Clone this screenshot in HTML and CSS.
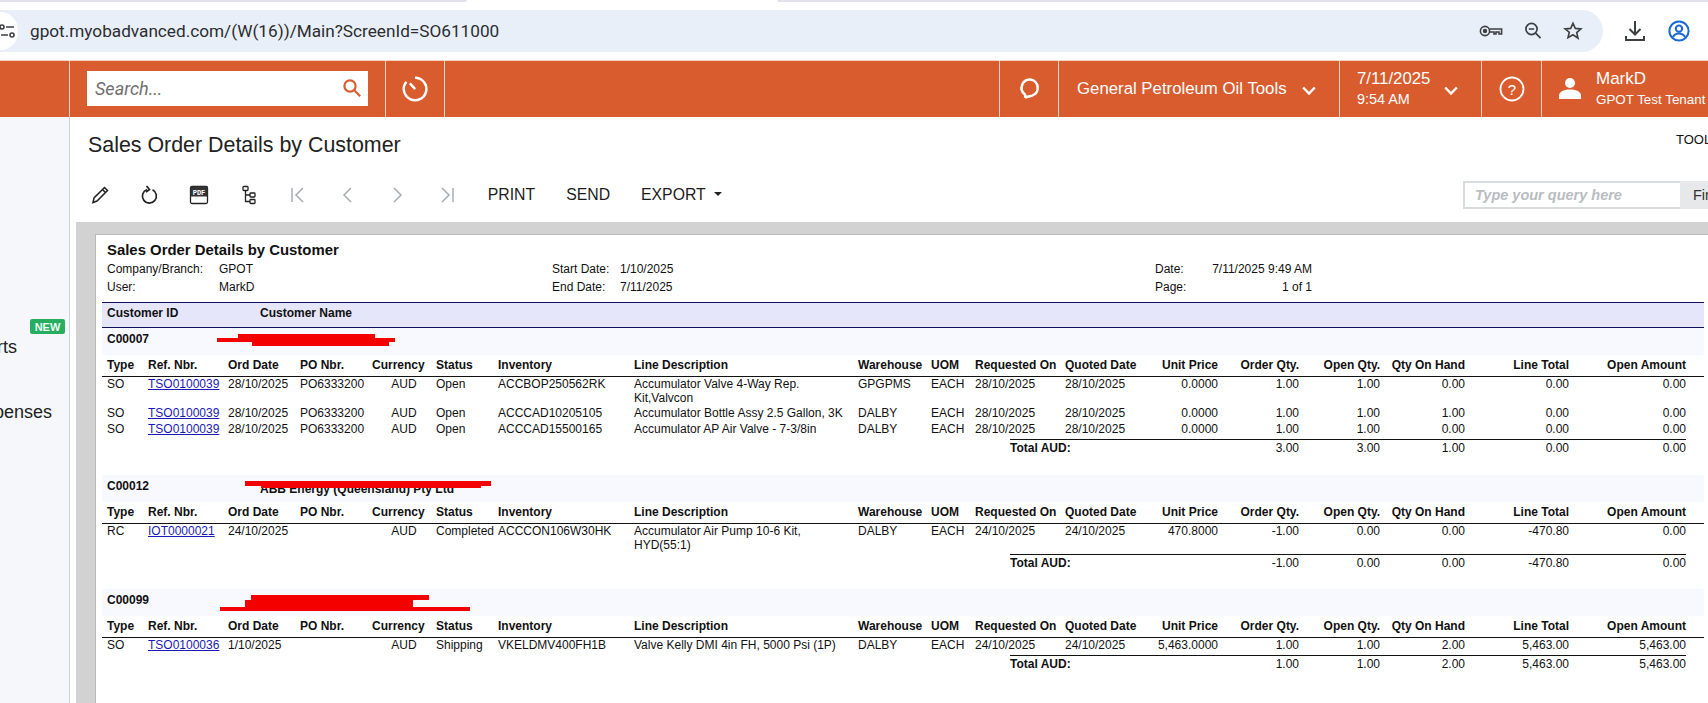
FILE: index.html
```html
<!DOCTYPE html>
<html lang="en">
<head>
<meta charset="utf-8">
<title>Sales Order Details by Customer</title>
<link rel="stylesheet" href="styles.css">
</head>
<body>
<header class="chrome">
  <div class="tabstrip"><span class="tab-edge tab-edge--a"></span><span class="tab-edge tab-edge--b"></span></div>
  <div class="chrome-row">
    <div class="omnibox">
      <span class="site-info">
        <svg width="16" height="16" viewBox="0 0 16 16" fill="none" stroke="#3c4043" stroke-width="1.6"><circle cx="2" cy="4" r="2"/><path d="M6 4h8M1 12h7"/><circle cx="12" cy="12" r="2"/></svg>
      </span>
      <span class="url">gpot.myobadvanced.com/(W(16))/Main?ScreenId=SO611000</span>
      <span class="omni-icons">
        <svg width="24" height="16" viewBox="0 0 24 16" fill="none" stroke="#3c4043" stroke-width="1.6"><circle cx="6" cy="8" r="4.6"/><circle cx="6" cy="8" r="1.4" fill="#3c4043"/><path d="M10.6 6h12v5h-2.6V9H17v2h-2V9h-4.4"/></svg>
        <svg width="20" height="20" viewBox="0 0 20 20" fill="none" stroke="#3c4043" stroke-width="1.7"><circle cx="8.5" cy="8" r="5.6"/><path d="M5.8 8h5.4M12.6 12.2l5 5"/></svg>
        <svg width="20" height="20" viewBox="0 0 20 20" fill="none" stroke="#3c4043" stroke-width="1.6"><path d="M10 2.2l2.3 5.2 5.6.5-4.2 3.7 1.3 5.5L10 13.8l-5 2.9 1.3-5.5L2.1 7.9l5.6-.5z"/></svg>
      </span>
    </div>
    <span class="chrome-btn chrome-btn--dl">
      <svg width="22" height="24" viewBox="0 0 22 24" fill="none" stroke="#3c4043" stroke-width="2"><path d="M11 2v13M5.5 10l5.5 5.5 5.500-5.500"/><path d="M2 17v4h18v-4" stroke-width="2"/></svg>
    </span>
    <span class="chrome-btn chrome-btn--profile">
      <svg width="22" height="22" viewBox="0 0 22 22" fill="none" stroke="#1a68d1" stroke-width="2"><circle cx="11" cy="11" r="9.6"/><circle cx="11" cy="8.6" r="3.2"/><path d="M4.8 17c1.6-2.6 3.6-3.6 6.2-3.6s4.6 1 6.2 3.6"/></svg>
    </span>
  </div>
</header>

<nav class="topbar">
  <div class="bar-cell bar-logo"></div>
  <div class="bar-cell bar-search">
    <div class="search-box">
      <span class="search-ph">Search...</span>
      <svg width="20" height="20" viewBox="0 0 20 20" fill="none" stroke="#d95c2e" stroke-width="2.2"><circle cx="8" cy="8" r="5.6"/><path d="M12.2 12.2l6 6"/></svg>
    </div>
  </div>
  <div class="bar-cell bar-timer">
    <svg width="28" height="28" viewBox="0 0 26 26" fill="none" stroke="#fff" stroke-width="2.3"><path d="M13 2.5a10.5 10.5 0 1 1-8 3.8"/><path d="M8.2 7.8l5 5.4"/></svg>
  </div>
  <div class="bar-cell bar-spacer"></div>
  <div class="bar-cell bar-chat">
    <svg width="24" height="26" viewBox="0 0 20 22" fill="none" stroke="#fff" stroke-width="2.2"><path d="M11 3a7 7 0 0 1 1.6 13.600c-1.600.5-5.600 1.400-6 1.900.6-1.300.3-2.400-.3-3.100A7 7 0 0 1 11 3z"/></svg>
  </div>
  <div class="bar-cell bar-company">
    <span class="company-name">General Petroleum Oil Tools</span>
    <svg class="chev" width="14" height="10" viewBox="0 0 14 10" fill="none" stroke="#fff" stroke-width="2.4"><path d="M1.200 1.500L7 7.500l5.800-6"/></svg>
  </div>
  <div class="bar-cell bar-date">
    <div class="date-text"><div class="date-main">7/11/2025</div><div class="date-time">9:54 AM</div></div>
    <svg class="chev" width="14" height="10" viewBox="0 0 14 10" fill="none" stroke="#fff" stroke-width="2.4"><path d="M1.200 1.500L7 7.500l5.800-6"/></svg>
  </div>
  <div class="bar-cell bar-help">
    <svg width="26" height="26" viewBox="0 0 26 26" fill="none" stroke="#fff" stroke-width="1.8"><circle cx="13" cy="13" r="11.500"/><text x="13" y="18.500" class="help-q">?</text></svg>
  </div>
  <div class="bar-cell bar-user">
    <svg width="24" height="26" viewBox="0 0 24 26" fill="#fff"><circle cx="12" cy="7" r="5"/><path d="M1 23v-3c0-4 4-6.500 11-6.500s11 2.500 11 6.500v3z"/></svg>
    <div class="user-text"><div class="user-name">MarkD</div><div class="user-tenant">GPOT Test Tenant</div></div>
  </div>
</nav>

<div class="workspace">
  <aside class="sidebar">
    <span class="badge-new">NEW</span>
    <div class="nav-item nav-item--reports"><span>Reports</span></div>
    <div class="nav-item nav-item--expenses"><span>Expenses</span></div>
  </aside>

  <main class="content">
    <div class="title-row">
      <h1 class="page-title">Sales Order Details by Customer</h1>
      <span class="tools-link">TOOLS</span>
    </div>
    <div class="toolbar">
      <span class="tool">
        <svg width="20" height="20" viewBox="0 0 20 20" fill="none" stroke="#222" stroke-width="1.500"><path d="M3 17.500l1-4.500L14.500 2.500l3 3L7 16z"/><path d="M12.500 4.500l3 3"/></svg>
      </span>
      <span class="tool">
        <svg width="20" height="20" viewBox="0 0 20 20" fill="none" stroke="#222" stroke-width="1.700"><path d="M8 4.500a7 7 0 1 0 5.500 .3"/><path d="M7.500 1l3 3.500-3.500 2.500"/></svg>
      </span>
      <span class="tool">
        <svg width="20" height="20" viewBox="0 0 20 20"><rect x="1.500" y="1.500" width="17" height="17" rx="1.500" fill="none" stroke="#222" stroke-width="1.300"/><rect x="1.500" y="1.500" width="17" height="10" fill="#333"/><text x="10" y="9.800" class="pdf-label">PDF</text></svg>
      </span>
      <span class="tool">
        <svg width="14" height="20" viewBox="0 0 14 20" fill="none" stroke="#222" stroke-width="1.300"><rect x="1" y="1.500" width="5" height="4" rx=".8"/><rect x="8" y="8" width="5" height="4" rx=".8"/><rect x="8" y="14.500" width="5" height="4" rx=".8"/><path d="M3.500 5.500V16.500H8M3.500 10H8"/></svg>
      </span>
      <span class="tool">
        <svg width="20" height="20" viewBox="0 0 20 20" fill="none" stroke="#a9adb3" stroke-width="1.500"><path d="M4 3v14M15 3L8 10l7 7"/></svg>
      </span>
      <span class="tool">
        <svg width="20" height="20" viewBox="0 0 20 20" fill="none" stroke="#a9adb3" stroke-width="1.500"><path d="M13 3l-7 7 7 7"/></svg>
      </span>
      <span class="tool">
        <svg width="20" height="20" viewBox="0 0 20 20" fill="none" stroke="#a9adb3" stroke-width="1.500"><path d="M7 3l7 7-7 7"/></svg>
      </span>
      <span class="tool">
        <svg width="20" height="20" viewBox="0 0 20 20" fill="none" stroke="#a9adb3" stroke-width="1.500"><path d="M16 3v14M5 3l7 7-7 7"/></svg>
      </span>
      <span class="tool-text tool-text--print">PRINT</span>
      <span class="tool-text tool-text--send">SEND</span>
      <span class="tool-text tool-text--export">EXPORT<i class="caret"></i></span>
      <div class="query">
        <span class="query-input">Type your query here</span>
        <span class="query-btn">Find</span>
      </div>
    </div>

    <div class="viewer">
      <div class="sheet">
        <div class="report-title">Sales Order Details by Customer</div>
        <div class="meta">
          <span>Company/Branch:</span><span>GPOT</span><span>Start Date:</span><span>1/10/2025</span><span>Date:</span><span class="meta-right">7/11/2025 9:49 AM</span>
          <span>User:</span><span>MarkD</span><span>End Date:</span><span>7/11/2025</span><span>Page:</span><span class="meta-right">1 of 1</span>
        </div>
        <div class="cust-head"><span>Customer ID</span><span>Customer Name</span></div>

        <section class="group">
          <div class="band">
            <span class="band-id">C00007</span>
            <svg class="scribble" width="400" height="27"><rect x="136" y="6" width="137" height="4"/><rect x="115" y="10" width="178" height="4"/><rect x="150" y="14" width="137" height="4"/></svg>
          </div>
          <div class="grid head">
            <span>Type</span><span>Ref. Nbr.</span><span>Ord Date</span><span>PO Nbr.</span><span>Currency</span><span>Status</span><span>Inventory</span><span>Line Description</span><span>Warehouse</span><span>UOM</span><span>Requested On</span><span>Quoted Date</span><span class="r">Unit Price</span><span class="r">Order Qty.</span><span class="r">Open Qty.</span><span class="r">Qty On Hand</span><span class="r">Line Total</span><span class="r">Open Amount</span>
          </div>
          <div class="grid row">
            <span>SO</span><a href="#">TSO0100039</a><span>28/10/2025</span><span>PO6333200</span><span class="c">AUD</span><span>Open</span><span>ACCBOP250562RK</span><span class="desc">Accumulator Valve 4-Way Rep. Kit,Valvcon</span><span>GPGPMS</span><span>EACH</span><span>28/10/2025</span><span>28/10/2025</span><span class="r">0.0000</span><span class="r">1.00</span><span class="r">1.00</span><span class="r">0.00</span><span class="r">0.00</span><span class="r">0.00</span>
          </div>
          <div class="grid row">
            <span>SO</span><a href="#">TSO0100039</a><span>28/10/2025</span><span>PO6333200</span><span class="c">AUD</span><span>Open</span><span>ACCCAD10205105</span><span class="desc">Accumulator Bottle Assy 2.5 Gallon, 3K</span><span>DALBY</span><span>EACH</span><span>28/10/2025</span><span>28/10/2025</span><span class="r">0.0000</span><span class="r">1.00</span><span class="r">1.00</span><span class="r">1.00</span><span class="r">0.00</span><span class="r">0.00</span>
          </div>
          <div class="grid row">
            <span>SO</span><a href="#">TSO0100039</a><span>28/10/2025</span><span>PO6333200</span><span class="c">AUD</span><span>Open</span><span>ACCCAD15500165</span><span class="desc">Accumulator AP Air Valve - 7-3/8in</span><span>DALBY</span><span>EACH</span><span>28/10/2025</span><span>28/10/2025</span><span class="r">0.0000</span><span class="r">1.00</span><span class="r">1.00</span><span class="r">0.00</span><span class="r">0.00</span><span class="r">0.00</span>
          </div>
          <div class="total">
            <b>Total AUD:</b><span class="r">3.00</span><span class="r">3.00</span><span class="r">1.00</span><span class="r">0.00</span><span class="r">0.00</span>
          </div>
        </section>

        <section class="group group--second">
          <div class="band">
            <span class="band-id">C00012</span><span class="band-name">ABB Energy (Queensland) Pty Ltd</span>
            <svg class="scribble" width="400" height="27"><rect x="143" y="6" width="246" height="5"/><rect x="159" y="10" width="220" height="3"/></svg>
          </div>
          <div class="grid head">
            <span>Type</span><span>Ref. Nbr.</span><span>Ord Date</span><span>PO Nbr.</span><span>Currency</span><span>Status</span><span>Inventory</span><span>Line Description</span><span>Warehouse</span><span>UOM</span><span>Requested On</span><span>Quoted Date</span><span class="r">Unit Price</span><span class="r">Order Qty.</span><span class="r">Open Qty.</span><span class="r">Qty On Hand</span><span class="r">Line Total</span><span class="r">Open Amount</span>
          </div>
          <div class="grid row">
            <span>RC</span><a href="#">IOT0000021</a><span>24/10/2025</span><span></span><span class="c">AUD</span><span>Completed</span><span>ACCCON106W30HK</span><span class="desc">Accumulator Air Pump 10-6 Kit, HYD(55:1)</span><span>DALBY</span><span>EACH</span><span>24/10/2025</span><span>24/10/2025</span><span class="r">470.8000</span><span class="r">-1.00</span><span class="r">0.00</span><span class="r">0.00</span><span class="r">-470.80</span><span class="r">0.00</span>
          </div>
          <div class="total">
            <b>Total AUD:</b><span class="r">-1.00</span><span class="r">0.00</span><span class="r">0.00</span><span class="r">-470.80</span><span class="r">0.00</span>
          </div>
        </section>

        <section class="group">
          <div class="band">
            <span class="band-id">C00099</span>
            <svg class="scribble" width="400" height="27"><rect x="149" y="6" width="178" height="5"/><rect x="143" y="11" width="168" height="7"/><rect x="118" y="18" width="250" height="4"/></svg>
          </div>
          <div class="grid head">
            <span>Type</span><span>Ref. Nbr.</span><span>Ord Date</span><span>PO Nbr.</span><span>Currency</span><span>Status</span><span>Inventory</span><span>Line Description</span><span>Warehouse</span><span>UOM</span><span>Requested On</span><span>Quoted Date</span><span class="r">Unit Price</span><span class="r">Order Qty.</span><span class="r">Open Qty.</span><span class="r">Qty On Hand</span><span class="r">Line Total</span><span class="r">Open Amount</span>
          </div>
          <div class="grid row">
            <span>SO</span><a href="#">TSO0100036</a><span>1/10/2025</span><span></span><span class="c">AUD</span><span>Shipping</span><span>VKELDMV400FH1B</span><span class="desc">Valve Kelly DMI 4in FH, 5000 Psi (1P)</span><span>DALBY</span><span>EACH</span><span>24/10/2025</span><span>24/10/2025</span><span class="r">5,463.0000</span><span class="r">1.00</span><span class="r">1.00</span><span class="r">2.00</span><span class="r">5,463.00</span><span class="r">5,463.00</span>
          </div>
          <div class="total">
            <b>Total AUD:</b><span class="r">1.00</span><span class="r">1.00</span><span class="r">2.00</span><span class="r">5,463.00</span><span class="r">5,463.00</span>
          </div>
        </section>
      </div>
    </div>
  </main>
</div>
</body>
</html>
```
FILE: styles.css
```css
* { box-sizing: border-box; }
html, body { height: 100%; }
body {
  margin: 0;
  width: 1708px;
  height: 703px;
  overflow: hidden;
  display: flex;
  flex-direction: column;
  background: #fff;
  font-family: "Liberation Sans", Arial, sans-serif;
  color: #1c1c1c;
}

/* browser chrome */
.chrome { height: 60px; flex: none; background: #fff; }
.tabstrip { height: 3px; display: flex; justify-content: space-between; }
.tab-edge { display: block; height: 2px; background: #e3e1ec; }
.tab-edge--a { width: 467px; border-radius: 0 0 6px 0; }
.tab-edge--b { width: 931px; border-radius: 0 0 0 6px; }
.chrome-row { display: flex; align-items: center; height: 42px; margin-top: 7px; }
.omnibox {
  width: 1603px;
  height: 42px;
  display: flex;
  align-items: center;
  background: #e9eff8;
  border-radius: 0 21px 21px 0;
}
.site-info {
  width: 18px;
  height: 38px;
  flex: none;
  display: flex;
  align-items: center;
  justify-content: flex-end;
  background: #fff;
  border-radius: 0 19px 19px 0;
  overflow: hidden;
}
.site-info svg { flex: none; margin-right: 2px; }
.url { margin-left: 12px; font-family: Roboto, sans-serif; font-size: 17.200px; color: #2b2d30; white-space: nowrap; }
.omni-icons { margin-left: auto; padding-right: 20px; display: flex; align-items: center; gap: 20px; }
.chrome-btn { display: flex; align-items: center; }
.chrome-btn--dl { margin-left: 21px; }
.chrome-btn--profile { margin-left: 22px; }

/* orange bar */
.topbar {
  height: 57px;
  flex: none;
  display: flex;
  background: #d95c2e;
  border-top: 1px solid #f3d3c4;
  color: #fff;
}
.bar-cell {
  display: flex;
  align-items: center;
  flex: none;
  border-right: 1px solid rgba(255, 255, 255, .75);
}
.bar-logo { width: 70px; }
.bar-search { width: 316px; padding-left: 17px; }
.search-box {
  width: 281px;
  height: 35px;
  margin-top: -2px;
  display: flex;
  align-items: center;
  justify-content: space-between;
  padding: 0 6px 0 8px;
  background: #fff;
}
.search-ph { font-family: Roboto, sans-serif; font-style: italic; font-size: 18px; color: #6f6f6f; }
.bar-timer { width: 59px; justify-content: center; }
.bar-spacer { flex: 1; }
.bar-chat { width: 59px; justify-content: center; }
.bar-company { width: 281px; padding-left: 18px; }
.company-name { font-size: 16.800px; white-space: nowrap; }
.bar-company .chev { margin-left: 15px; margin-top: 4px; }
.bar-date { width: 142px; padding-left: 17px; }
.date-main { font-size: 16.800px; line-height: 21px; }
.date-time { font-size: 14.400px; line-height: 21px; }
.bar-date .chev { margin-left: 14px; margin-top: 4px; }
.bar-help { width: 60px; justify-content: center; }
.help-q { font-family: "Liberation Sans", sans-serif; font-size: 15px; fill: #fff; stroke: none; text-anchor: middle; }
.bar-user { width: 166px; border-right: 0; padding-left: 16px; overflow: hidden; }
.user-text { margin-left: 14px; white-space: nowrap; }
.user-name { font-size: 17px; line-height: 21px; }
.user-tenant { font-size: 13.400px; line-height: 21px; }

/* layout under bar */
.workspace { flex: 1; display: flex; min-height: 0; }
.sidebar {
  width: 70px;
  flex: none;
  display: flex;
  flex-direction: column;
  align-items: flex-start;
  padding-top: 202px;
  background: #f5f7fa;
  border-right: 1px solid #d0d3d6;
  overflow: hidden;
}
.badge-new {
  margin-left: 30px;
  width: 35px;
  height: 15px;
  display: flex;
  align-items: center;
  justify-content: center;
  background: #27ae60;
  border-radius: 2px;
  color: #eafff2;
  font-size: 11px;
  font-weight: 700;
}
.nav-item {
  display: flex;
  justify-content: flex-end;
  overflow: hidden;
  font-size: 18px;
  line-height: 22px;
  color: #222;
  white-space: nowrap;
}
.nav-item span { flex: none; }
.nav-item--reports { width: 17px; margin-top: 2px; }
.nav-item--expenses { width: 52px; margin-top: 43px; }

.content { flex: 1; min-width: 0; display: flex; flex-direction: column; background: #fff; }
.title-row { height: 58px; flex: none; display: flex; justify-content: space-between; padding: 0 0 2px 18px; align-items: center; }
.page-title { margin: 0; font-family: "Liberation Sans", sans-serif; font-size: 21.400px; font-weight: 400; color: #222; }
.tools-link { align-self: flex-start; margin-top: 15px; width: 32px; font-size: 13px; color: #111; overflow: hidden; white-space: nowrap; }

.toolbar { height: 40px; flex: none; display: flex; align-items: center; padding-left: 5px; margin-bottom: 7px; }
.tool { width: 49.600px; flex: none; display: flex; justify-content: center; }
.pdf-label { font-family: "Liberation Mono", monospace; font-size: 7px; font-weight: 700; fill: #fff; text-anchor: middle; }
.tool-text { font-size: 15.800px; color: #1c1c1c; }
.tool-text--print { margin-left: 16px; }
.tool-text--send { margin-left: 31px; }
.tool-text--export { margin-left: 31px; display: flex; align-items: center; }
.caret { margin-left: 8px; border: 4.500px solid transparent; border-top-color: #222; border-bottom: 0; margin-top: -2px; }
.query { margin-left: auto; width: 245px; height: 28px; display: flex; flex: none; }
.query-input {
  width: 217px;
  display: flex;
  align-items: center;
  padding-left: 10px;
  border: 2px solid #d9dcdf;
  border-right: 0;
  font-size: 14.500px;
  font-weight: 700;
  font-style: italic;
  color: #b9bcc0;
  white-space: nowrap;
}
.query-btn {
  width: 28px;
  display: flex;
  align-items: center;
  padding-left: 13px;
  background: #e6e8ea;
  font-size: 14.500px;
  color: #333;
  overflow: hidden;
  white-space: nowrap;
}

/* report */
.viewer { flex: 1; min-height: 0; margin-left: 6px; padding: 12px 0 0 19px; background: #d2d2d2; overflow: hidden; }
.sheet {
  height: 100%;
  padding: 7px 4px 0 6px;
  background: #fff;
  border-top: 1px solid #b9b9b9;
  border-left: 1px solid #b9b9b9;
  font-size: 12px;
  line-height: 14px;
  color: #111;
}
.report-title { padding-left: 5px; font-size: 14.900px; font-weight: 700; line-height: 16px; }
.meta {
  display: grid;
  grid-template-columns: 112px 333px 68px 535px 48px 109px;
  grid-auto-rows: 18px;
  align-items: center;
  margin-top: 2px;
  padding-left: 5px;
  white-space: nowrap;
}
.meta-right { text-align: right; }
.cust-head {
  height: 26px;
  margin-top: 6px;
  padding: 0 0 5px 5px;
  display: grid;
  grid-template-columns: 153px 1fr;
  align-items: center;
  background: #e6e6fa;
  border-top: 1px solid #10105f;
  border-bottom: 1px solid #10105f;
  font-weight: 700;
}
.group { margin-bottom: 19px; }
.group--second { margin-top: 20px; }
.band {
  position: relative;
  height: 27px;
  padding: 0 0 6px 5px;
  display: grid;
  grid-template-columns: 153px 1fr;
  align-items: center;
  background: #f8f8ff;
  font-weight: 700;
}
.band-name { padding-top: 6px; }
.scribble { position: absolute; left: 0; top: 0; fill: #f50000; }
.grid {
  display: grid;
  grid-template-columns: 41px 80px 72px 72px 64px 62px 136px 224px 73px 44px 90px 80px 73px 81px 81px 85px 104px 117px 18px;
  padding-left: 5px;
  white-space: nowrap;
}
.head { height: 22px; padding-top: 3px; font-weight: 700; border-bottom: 1px solid #111; }
.row { min-height: 16px; padding-bottom: 1px; }
.row a { color: #1a1ab8; }
.desc { white-space: normal; padding-right: 12px; }
.r { text-align: right; }
.c { text-align: center; }
.total {
  display: grid;
  grid-template-columns: 208px 81px 81px 85px 104px 117px;
  margin: 1px 0 0 908px;
  width: 676px;
  height: 16px;
  padding-top: 1px;
  border-top: 1px solid #111;
  white-space: nowrap;
}
```
